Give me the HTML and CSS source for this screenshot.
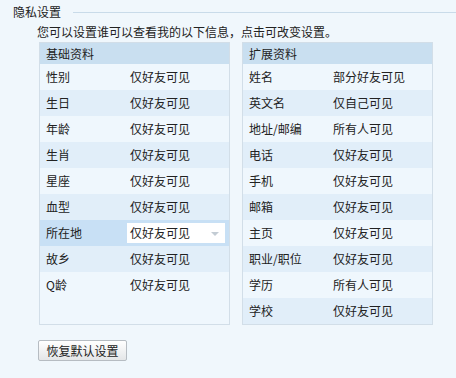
FILE: index.html
```html
<!DOCTYPE html>
<html lang="zh-CN">
<head>
<meta charset="utf-8">
<title>隐私设置</title>
<link rel="stylesheet" href="styles.css">
</head>
<body>
<div class="page">
  <div class="title-row">
    <span class="title">隐私设置</span>
    <span class="title-line"></span>
  </div>
  <div class="intro">您可以设置谁可以查看我的以下信息，点击可改变设置。</div>
  <div class="panels">
    <div class="panel">
      <div class="panel-head">基础资料</div>
      <div class="row"><span class="label">性别</span><span class="value">仅好友可见</span></div>
      <div class="row alt"><span class="label">生日</span><span class="value">仅好友可见</span></div>
      <div class="row"><span class="label">年龄</span><span class="value">仅好友可见</span></div>
      <div class="row alt"><span class="label">生肖</span><span class="value">仅好友可见</span></div>
      <div class="row"><span class="label">星座</span><span class="value">仅好友可见</span></div>
      <div class="row alt"><span class="label">血型</span><span class="value">仅好友可见</span></div>
      <div class="row active"><span class="label">所在地</span><span class="select"><span class="select-text">仅好友可见</span><span class="arrow"></span></span></div>
      <div class="row alt"><span class="label">故乡</span><span class="value">仅好友可见</span></div>
      <div class="row"><span class="label">Q龄</span><span class="value">仅好友可见</span></div>
    </div>
    <div class="panel">
      <div class="panel-head">扩展资料</div>
      <div class="row"><span class="label">姓名</span><span class="value">部分好友可见</span></div>
      <div class="row alt"><span class="label">英文名</span><span class="value">仅自己可见</span></div>
      <div class="row"><span class="label">地址/邮编</span><span class="value">所有人可见</span></div>
      <div class="row alt"><span class="label">电话</span><span class="value">仅好友可见</span></div>
      <div class="row"><span class="label">手机</span><span class="value">仅好友可见</span></div>
      <div class="row alt"><span class="label">邮箱</span><span class="value">仅好友可见</span></div>
      <div class="row"><span class="label">主页</span><span class="value">仅好友可见</span></div>
      <div class="row alt"><span class="label">职业/职位</span><span class="value">仅好友可见</span></div>
      <div class="row"><span class="label">学历</span><span class="value">所有人可见</span></div>
      <div class="row alt"><span class="label">学校</span><span class="value">仅好友可见</span></div>
    </div>
  </div>
  <div class="actions">
    <button class="btn" type="button">恢复默认设置</button>
  </div>
</div>
</body>
</html>
```
FILE: styles.css
```css
html, body {
  margin: 0;
  padding: 0;
  background: #f0f7fc;
}
body {
  font-family: "Noto Sans CJK SC", "Liberation Sans", sans-serif;
  font-size: 12px;
  color: #222;
  width: 456px;
  height: 378px;
  overflow: hidden;
}
.page {
  display: flex;
  flex-direction: column;
}
.title-row {
  display: flex;
  align-items: center;
  height: 23px;
  padding-left: 13px;
}
.title {
  line-height: 14px;
}
.title-line {
  flex: 1;
  margin-left: 12px;
  margin-top: 1px;
  border-top: 1px solid #c9dbe9;
}
.intro {
  margin-top: 2px;
  padding-left: 37px;
  line-height: 14px;
  height: 14px;
}
.panels {
  display: flex;
  margin-top: 3px;
  padding-left: 39px;
  gap: 12px;
  align-items: stretch;
}
.panel {
  width: 189px;
  border: 1px solid #d2dee8;
  background: #eff7fd;
  display: flex;
  flex-direction: column;
}
.panel-head {
  height: 21px;
  line-height: 21px;
  padding-left: 6px;
  background: #c9dff0;
}
.row {
  display: flex;
  align-items: center;
  height: 26px;
  padding-left: 6px;
}
.row.alt {
  background: #e1eef9;
}
.row.active {
  background: #c8e0f5;
}
.label {
  width: 84px;
  flex: none;
  line-height: 14px;
}
.value {
  line-height: 14px;
}
.select {
  display: flex;
  align-items: center;
  width: 95px;
  height: 20px;
  margin-left: -3px;
  padding-left: 3px;
  background: #fff;
  position: relative;
}
.select-text {
  line-height: 14px;
}
.arrow {
  position: absolute;
  right: 6px;
  top: 9px;
  width: 0;
  height: 0;
  border-left: 4px solid transparent;
  border-right: 4px solid transparent;
  border-top: 4px solid #c3ccd4;
}
.actions {
  margin-top: 15px;
  padding-left: 38px;
}
.btn {
  font-family: "Noto Sans CJK SC", "Liberation Sans", sans-serif;
  font-size: 12px;
  color: #222;
  width: 89px;
  height: 21px;
  padding: 0;
  line-height: 19px;
  border: 1px solid #b6bcc2;
  border-radius: 2px;
  background: linear-gradient(#ffffff, #e4e6e8);
}
```
